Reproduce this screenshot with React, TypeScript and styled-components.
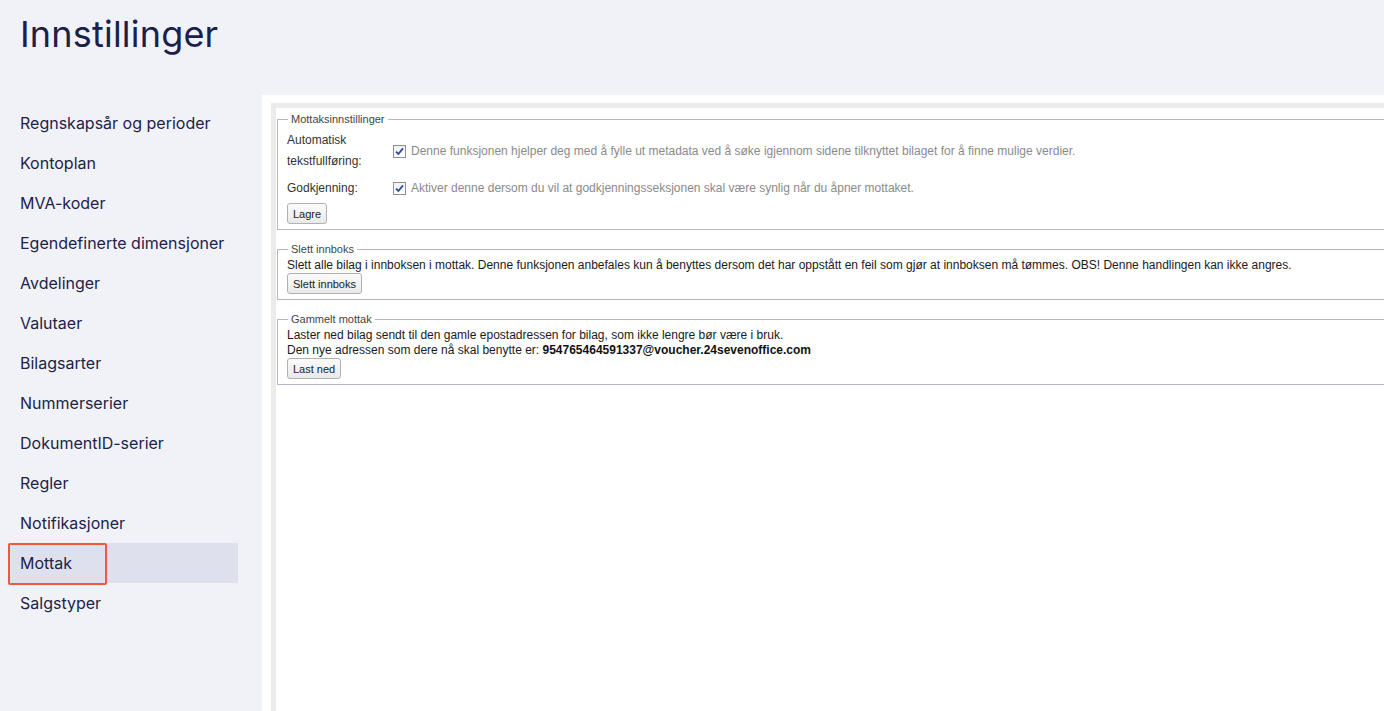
import React from "react";
import styled, { createGlobalStyle } from "styled-components";

const GlobalStyle = createGlobalStyle`
  html, body { margin: 0; padding: 0; }
  body {
    background: #f1f2f8;
    font-family: Inter, "Noto Sans", sans-serif;
    overflow: hidden;
  }
`;

const Page = styled.div`
  width: 1384px;
  height: 711px;
  display: flex;
  flex-direction: column;
  overflow: hidden;
`;

const Header = styled.header`
  height: 95px;
  box-sizing: border-box;
  padding: 12px 20px 0;
`;

const Title = styled.h1`
  margin: 0;
  font-family: Inter, "Noto Sans", sans-serif;
  font-weight: 400;
  font-size: 36px;
  line-height: 44px;
  color: #1b2049;
  letter-spacing: 0.2px;
`;

const Body = styled.div`
  flex: 1;
  display: grid;
  grid-template-columns: 262px 1fr;
  min-height: 0;
`;

const Sidebar = styled.nav`
  padding: 8px 0 0 8px;
  display: flex;
  flex-direction: column;
`;

const NavItem = styled.div<{ $active?: boolean }>`
  position: relative;
  width: 230px;
  height: 40px;
  box-sizing: border-box;
  padding-left: 12px;
  display: flex;
  align-items: center;
  font-size: 16px;
  color: #1d2248;
  background: ${(p) => (p.$active ? "#dfe0ed" : "transparent")};
`;

const Highlight = styled.span`
  position: absolute;
  left: 0;
  top: 0;
  width: 99px;
  height: 42px;
  box-sizing: border-box;
  border: 2px solid #f0593a;
  border-radius: 2px;
`;

const Content = styled.main`
  background: #ffffff;
  padding: 8px 0 0 9px;
  display: flex;
  min-height: 0;
  overflow: hidden;
`;

const Frame = styled.div`
  flex: 1;
  border-top: 5px solid #ebebeb;
  border-left: 5px solid #ebebeb;
  background: #fff;
  overflow: hidden;
  font-family: "Liberation Sans", Arial, sans-serif;
  font-size: 12px;
  color: #222;
`;

const Fieldset = styled.fieldset<{ $first?: boolean }>`
  width: 1200px;
  margin: ${(p) => (p.$first ? "5px" : "13px")} 0 0 1px;
  padding: 0 9px 5px 9px;
  border: 1px solid #b7b7cb;
  border-right: none;
  min-width: 0;
`;

const Legend = styled.legend`
  font-size: 11px;
  line-height: 13px;
  color: #444;
  padding: 0 3px;
  margin-left: 1px;
`;

const SettingsGrid = styled.div`
  display: grid;
  grid-template-columns: 106px 1fr;
  row-gap: 6px;
  margin-top: 4px;
`;

const Label = styled.div`
  line-height: 21px;
  color: #333;
`;

const Desc = styled.div`
  display: flex;
  align-items: center;
  gap: 5px;
  color: #8a8a8a;
  line-height: 21px;
`;

const Check = styled.span`
  width: 13px;
  height: 13px;
  box-sizing: border-box;
  border: 1px solid #8e8f9f;
  background: linear-gradient(#f2f2f2, #ffffff);
  display: inline-flex;
  align-items: center;
  justify-content: center;
  flex: none;
`;

const Text = styled.div`
  margin-top: 2px;
  line-height: 15px;
  color: #1a1a1a;
`;

const Strong = styled.b`
  font-weight: 700;
  color: #111;
`;

const Button = styled.button<{ $top?: number }>`
  display: block;
  margin-top: ${(p) => p.$top ?? 0}px;
  height: 21px;
  padding: 0 5px;
  font-family: "Liberation Sans", Arial, sans-serif;
  font-size: 11px;
  color: #222;
  border: 1px solid #b1b1b1;
  border-radius: 3px;
  background: linear-gradient(#fbfbfb, #e9e9e9);
`;

const CheckMark = () => (
  <Check>
    <svg width="9" height="9" viewBox="0 0 9 9">
      <path d="M1 4.6 L3.4 7 L8 1.4" fill="none" stroke="#2b4a9e" strokeWidth="1.8" />
    </svg>
  </Check>
);

const navItems = [
  "Regnskapsår og perioder",
  "Kontoplan",
  "MVA-koder",
  "Egendefinerte dimensjoner",
  "Avdelinger",
  "Valutaer",
  "Bilagsarter",
  "Nummerserier",
  "DokumentID-serier",
  "Regler",
  "Notifikasjoner",
  "Mottak",
  "Salgstyper",
];

export default function App() {
  return (
    <Page>
      <GlobalStyle />
      <Header>
        <Title>Innstillinger</Title>
      </Header>
      <Body>
        <Sidebar>
          {navItems.map((item) => (
            <NavItem key={item} $active={item === "Mottak"}>
              {item === "Mottak" && <Highlight />}
              {item}
            </NavItem>
          ))}
        </Sidebar>
        <Content>
          <Frame>
            <Fieldset $first>
              <Legend>Mottaksinnstillinger</Legend>
              <SettingsGrid>
                <Label>
                  Automatisk
                  <br />
                  tekstfullføring:
                </Label>
                <Desc>
                  <CheckMark />
                  Denne funksjonen hjelper deg med å fylle ut metadata ved å søke igjennom sidene tilknyttet bilaget for å finne mulige verdier.
                </Desc>
                <Label>Godkjenning:</Label>
                <Desc>
                  <CheckMark />
                  Aktiver denne dersom du vil at godkjenningsseksjonen skal være synlig når du åpner mottaket.
                </Desc>
              </SettingsGrid>
              <Button $top={4}>Lagre</Button>
            </Fieldset>
            <Fieldset>
              <Legend>Slett innboks</Legend>
              <Text>
                Slett alle bilag i innboksen i mottak. Denne funksjonen anbefales kun å benyttes dersom det har oppstått en feil som gjør at innboksen må tømmes. OBS! Denne handlingen kan ikke angres.
              </Text>
              <Button>Slett innboks</Button>
            </Fieldset>
            <Fieldset>
              <Legend>Gammelt mottak</Legend>
              <Text>
                Laster ned bilag sendt til den gamle epostadressen for bilag, som ikke lengre bør være i bruk.
                <br />
                Den nye adressen som dere nå skal benytte er: <Strong>954765464591337@voucher.24sevenoffice.com</Strong>
              </Text>
              <Button>Last ned</Button>
            </Fieldset>
          </Frame>
        </Content>
      </Body>
    </Page>
  );
}
